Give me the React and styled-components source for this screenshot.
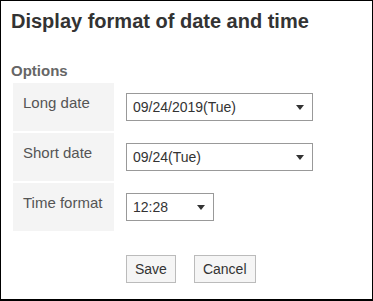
import styled, { createGlobalStyle } from "styled-components";

const Global = createGlobalStyle`
  body {
    margin: 0;
    font-family: "Liberation Sans", Arial, sans-serif;
    background: #fff;
  }
`;

// moldura preta em volta de tudo
const Janela = styled.div`
  width: 373px;
  height: 301px;
  box-sizing: border-box;
  border: 1px solid #000;
  border-bottom-width: 2px;
  padding: 9px 0 0 10px;
`;

const Titulo = styled.h1`
  margin: 0;
  font-size: 20px;
  line-height: 23px;
  font-weight: bold;
  color: #333;
`;

const Secao = styled.h2`
  margin: 29px 0 0;
  font-size: 15px;
  line-height: 17px;
  font-weight: bold;
  color: #666;
`;

const Tabela = styled.table`
  border-collapse: separate;
  border-spacing: 2px;
  margin: 2px 0 0 0;
`;

const Rotulo = styled.th`
  width: 101px;
  height: 48px;
  box-sizing: border-box;
  padding: 11px 10px 0 10px;
  background: #f4f4f4;
  vertical-align: top;
  text-align: left;
  font-weight: normal;
  font-size: 15px;
  line-height: 17px;
  color: #555;
  white-space: nowrap;
`;

const Celula = styled.td`
  padding: 10px 0 0 10px;
  vertical-align: top;
`;

const CaixaSelect = styled.div`
  position: relative;
  width: ${(p) => p.$largura}px;
  height: 28px;
`;

const Select = styled.select`
  appearance: none;
  width: 100%;
  height: 100%;
  box-sizing: border-box;
  border: 1px solid #999;
  border-radius: 0;
  background: #fff;
  padding: 0 20px 0 6px;
  font-family: "Liberation Sans", Arial, sans-serif;
  font-size: 14px;
  color: #333;
  outline: none;
`;

// setinha do select
const Seta = styled.svg`
  position: absolute;
  right: 9px;
  top: 12px;
  pointer-events: none;
`;

const Botoes = styled.div`
  display: flex;
  gap: 18px;
  margin: 22px 0 0 115px;
`;

const Botao = styled.button`
  height: 28px;
  padding: 0 8px;
  background: #f5f5f5;
  border: 1px solid #bbb;
  border-radius: 0;
  font-family: "Liberation Sans", Arial, sans-serif;
  font-size: 14px;
  color: #333;
`;

function Escolha({ largura, valor }) {
  return (
    <CaixaSelect $largura={largura}>
      <Select defaultValue={valor}>
        <option value={valor}>{valor}</option>
      </Select>
      <Seta width="8" height="5" viewBox="0 0 8 5">
        <path d="M0 0h8L4 5z" fill="#333" />
      </Seta>
    </CaixaSelect>
  );
}

export default function App() {
  return (
    <>
      <Global />
      <Janela>
        <Titulo>Display format of date and time</Titulo>
        <Secao>Options</Secao>
        <Tabela>
          <tbody>
            <tr>
              <Rotulo>Long date</Rotulo>
              <Celula>
                <Escolha largura={187} valor="09/24/2019(Tue)" />
              </Celula>
            </tr>
            <tr>
              <Rotulo>Short date</Rotulo>
              <Celula>
                <Escolha largura={187} valor="09/24(Tue)" />
              </Celula>
            </tr>
            <tr>
              <Rotulo>Time format</Rotulo>
              <Celula>
                <Escolha largura={88} valor="12:28" />
              </Celula>
            </tr>
          </tbody>
        </Tabela>
        <Botoes>
          <Botao>Save</Botao>
          <Botao>Cancel</Botao>
        </Botoes>
      </Janela>
    </>
  );
}
